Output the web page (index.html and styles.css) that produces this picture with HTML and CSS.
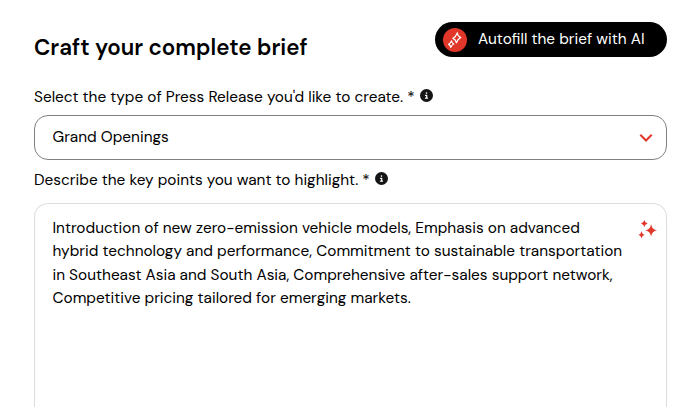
FILE: index.html
```html
<!DOCTYPE html>
<html lang="en">
<head>
  <meta charset="UTF-8">
  <title>Craft your complete brief</title>
  <link rel="stylesheet" href="styles.css">
</head>
<body>
  <div class="brief-container">
    <div class="brief-header">
      <h1>Craft your complete brief</h1>
      <button class="autofill-btn">
        <span class="autofill-icon">
          <svg width="24" height="24" viewBox="0 0 24 24" fill="none" stroke="#fff" stroke-width="1.2" stroke-linejoin="round">
            <path d="M14.4 4.8 Q14.6 8.4 17.8 9.4 Q14.8 10.8 13.4 14.8 Q12.8 11.6 9.9 10.4 Q13 8.8 14.4 4.8Z"/>
            <path d="M8.6 12.8 Q8.8 15.2 10.8 16 Q8.8 16.8 7.8 19.4 Q7.4 17.2 5.6 16.4 Q7.8 15.4 8.6 12.8Z"/>
          </svg>
        </span>
        <span class="autofill-text">Autofill the brief with AI</span>
      </button>
    </div>

    <div class="label">
      <span>Select the type of Press Release you'd like to create. *</span>
      <svg class="info" viewBox="0 0 512 512"><path fill="#151515" d="M256 0a256 256 0 1 0 0 512 256 256 0 1 0 0-512zm-40 336h24v-64h-24c-13 0-24-11-24-24s11-24 24-24h48c13 0 24 11 24 24v88h8c13 0 24 11 24 24s-11 24-24 24h-80c-13 0-24-11-24-24s11-24 24-24zm40-144a32 32 0 1 1 0-64 32 32 0 1 1 0 64z"/></svg>
    </div>
    <div class="select">
      <span>Grand Openings</span>
      <svg class="chevron" width="14" height="9" viewBox="0 0 14 9"><path d="M1.3 1.8 L7 7.5 L12.7 1.8" fill="none" stroke="#e0372a" stroke-width="2"/></svg>
    </div>

    <div class="label label-second">
      <span>Describe the key points you want to highlight. *</span>
      <svg class="info" viewBox="0 0 512 512"><path fill="#151515" d="M256 0a256 256 0 1 0 0 512 256 256 0 1 0 0-512zm-40 336h24v-64h-24c-13 0-24-11-24-24s11-24 24-24h48c13 0 24 11 24 24v88h8c13 0 24 11 24 24s-11 24-24 24h-80c-13 0-24-11-24-24s11-24 24-24zm40-144a32 32 0 1 1 0-64 32 32 0 1 1 0 64z"/></svg>
    </div>
    <div class="textbox">
      <p>Introduction of new zero-emission vehicle models, Emphasis on advanced<br>
        hybrid technology and performance, Commitment to sustainable transportation<br>
        in Southeast Asia and South Asia, Comprehensive after-sales support network,<br>
        Competitive pricing tailored for emerging markets.</p>
      <svg class="sparkles" width="20" height="20" viewBox="0 0 20 20" fill="#e0372a">
        <path d="M13.1 5.2 Q14 10.6 19 11.3 Q14 12 13.1 17.4 Q12.2 12 7.2 11.3 Q12.2 10.6 13.1 5.2Z"/>
        <path d="M6.3 1 Q6.9 4 9.6 4.5 Q6.9 5 6.3 8 Q5.7 5 3 4.5 Q5.7 4 6.3 1Z"/>
        <path d="M3.5 12.2 Q4.1 15.2 6.6 15.7 Q4.1 16.2 3.5 19.2 Q2.9 16.2 .4 15.7 Q2.9 15.2 3.5 12.2Z"/>
      </svg>
    </div>
  </div>
</body>
</html>
```
FILE: styles.css
```css
* {
  box-sizing: border-box;
}
body {
  margin: 0;
  background: #fff;
  color: #000;
  font-family: "DM Sans", Inter, sans-serif;
  font-size: 15.4px;
}
.brief-container {
  height: 407px;
  padding: 22px 30px 0 34px;
}
.brief-header {
  display: flex;
  justify-content: space-between;
  height: 64px;
}
h1 {
  margin: 12px 0 0;
  font-size: 22.35px;
  line-height: 28px;
  font-weight: 600;
  white-space: nowrap;
}
.autofill-btn {
  display: flex;
  align-items: center;
  gap: 11px;
  width: 232px;
  height: 35px;
  padding: 0 8px;
  border: none;
  border-radius: 18px;
  background: #000;
  color: #fff;
  font-family: inherit;
  font-size: 15.4px;
  white-space: nowrap;
}
.autofill-icon {
  width: 24px;
  height: 24px;
  border-radius: 50%;
  background: #e0372a;
}
.autofill-icon svg {
  display: block;
}
.autofill-text {
  padding-bottom: 1px;
}
.label {
  display: flex;
  align-items: center;
  gap: 5px;
  height: 21px;
  white-space: nowrap;
}
.label-second {
  margin-top: 9px;
}
.info {
  width: 13px;
  height: 13px;
  margin-top: -2px;
}
.select {
  display: flex;
  align-items: center;
  justify-content: space-between;
  height: 45px;
  margin-top: 8px;
  padding: 0 13px 1px 17.5px;
  border: 1px solid #808080;
  border-radius: 14px;
}
.textbox {
  display: flex;
  justify-content: space-between;
  height: 204px;
  margin-top: 13px;
  padding: 13px 8px 0 17.5px;
  border: 1px solid #dedede;
  border-bottom: none;
  border-radius: 14px 14px 0 0;
}
.textbox p {
  margin: 0;
  line-height: 23.4px;
  white-space: nowrap;
}
.sparkles {
  margin-top: 2px;
}
```
